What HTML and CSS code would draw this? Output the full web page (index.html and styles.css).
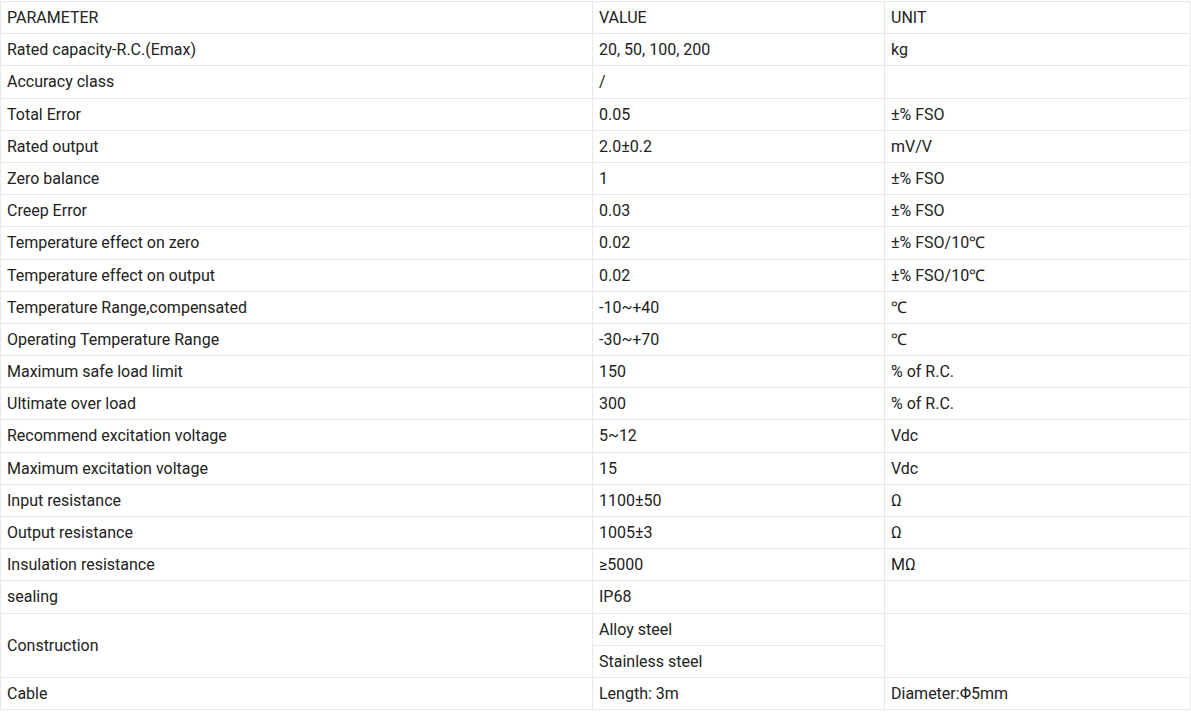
FILE: index.html
```html
<!DOCTYPE html>
<html>
<head>
<meta charset="utf-8">
<link rel="stylesheet" href="styles.css">
</head>
<body>
<table class="spec">
  <colgroup><col class="c1"><col class="c2"><col class="c3"></colgroup>
  <tbody>
    <tr><td>PARAMETER</td><td>VALUE</td><td>UNIT</td></tr>
    <tr><td>Rated capacity-R.C.(Emax)</td><td>20, 50, 100, 200</td><td>kg</td></tr>
    <tr><td>Accuracy class</td><td>/</td><td></td></tr>
    <tr><td>Total Error</td><td>0.05</td><td>±% FSO</td></tr>
    <tr><td>Rated output</td><td>2.0±0.2</td><td>mV/V</td></tr>
    <tr><td>Zero balance</td><td>1</td><td>±% FSO</td></tr>
    <tr><td>Creep Error</td><td>0.03</td><td>±% FSO</td></tr>
    <tr><td>Temperature effect on zero</td><td>0.02</td><td>±% FSO/10℃</td></tr>
    <tr><td>Temperature effect on output</td><td>0.02</td><td>±% FSO/10℃</td></tr>
    <tr><td>Temperature Range,compensated</td><td>-10~+40</td><td>℃</td></tr>
    <tr><td>Operating Temperature Range</td><td>-30~+70</td><td>℃</td></tr>
    <tr><td>Maximum safe load limit</td><td>150</td><td>% of R.C.</td></tr>
    <tr><td>Ultimate over load</td><td>300</td><td>% of R.C.</td></tr>
    <tr><td>Recommend excitation voltage</td><td>5~12</td><td>Vdc</td></tr>
    <tr><td>Maximum excitation voltage</td><td>15</td><td>Vdc</td></tr>
    <tr><td>Input resistance</td><td>1100±50</td><td>Ω</td></tr>
    <tr><td>Output resistance</td><td>1005±3</td><td>Ω</td></tr>
    <tr><td>Insulation resistance</td><td>≥5000</td><td>MΩ</td></tr>
    <tr><td>sealing</td><td>IP68</td><td></td></tr>
    <tr><td rowspan="2">Construction</td><td>Alloy steel</td><td rowspan="2"></td></tr>
    <tr><td>Stainless steel</td></tr>
    <tr><td>Cable</td><td>Length: 3m</td><td>Diameter:Φ5mm</td></tr>
  </tbody>
</table>
</body>
</html>
```
FILE: styles.css
```css
html, body {
  margin: 0;
  padding: 0;
  background: #ffffff;
}
body {
  font-family: Roboto, "Liberation Sans", sans-serif;
  font-size: 16px;
  color: #222222;
}
.spec {
  border-collapse: collapse;
  width: 1190px;
  table-layout: fixed;
  margin-top: 1px;
}
.c1 { width: 592px; }
.c2 { width: 292px; }
.c3 { width: 306px; }
.spec td {
  border: 1px solid #e9e9e9;
  padding: 5px 6px;
  line-height: 21.18px;
  height: 21.18px;
  vertical-align: middle;
  text-align: left;
}
```
